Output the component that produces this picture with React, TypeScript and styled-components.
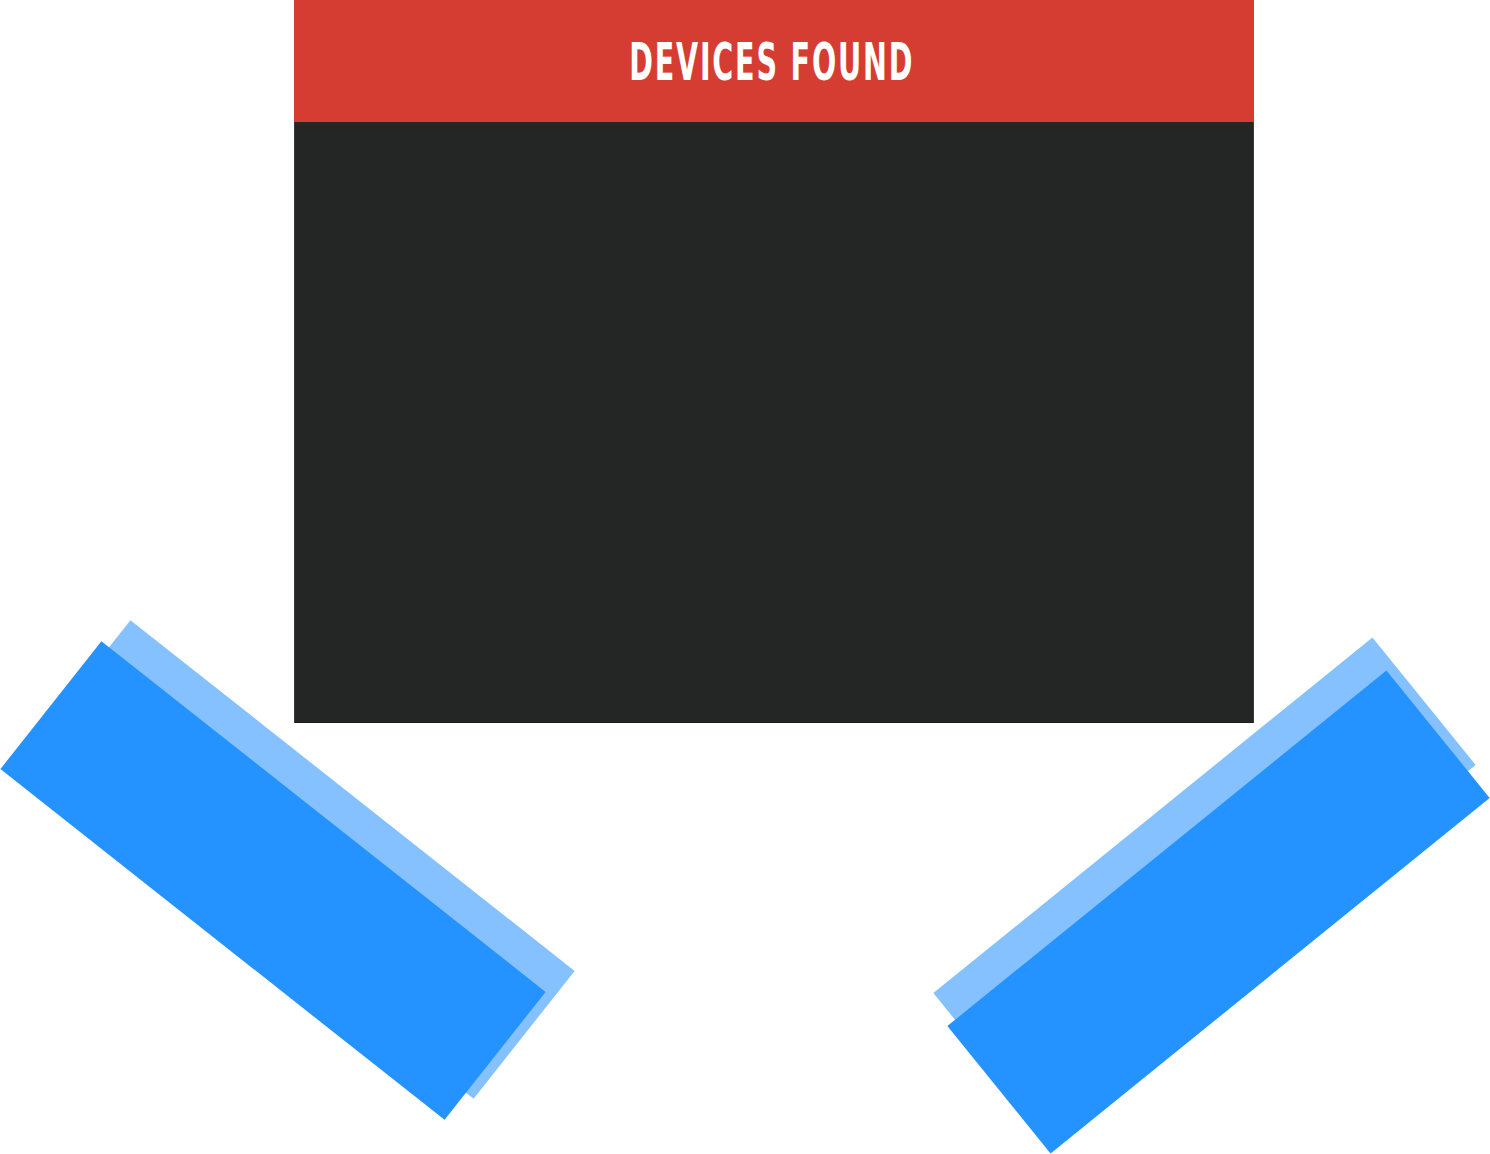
import React from 'react';
import styled, { createGlobalStyle } from 'styled-components';

const GlobalStyle = createGlobalStyle`
  html, body {
    margin: 0;
    padding: 0;
    background: #ffffff;
  }
`;

const Stage = styled.div`
  position: relative;
  width: 1490px;
  height: 1154px;
  overflow: hidden;
  background: #ffffff;
`;

const Panel = styled.section`
  position: relative;
  z-index: 1;
  width: 960px;
  margin: 0 auto 0 294px;
  display: flex;
  flex-direction: column;
`;

const PanelHeader = styled.header`
  height: 122px;
  background: #d63d32;
  display: flex;
  align-items: center;
  justify-content: center;
`;

const PanelTitle = styled.h1`
  margin: 0;
  font-family: 'Liberation Sans Narrow', 'DejaVu Sans Condensed', 'Liberation Sans', sans-serif;
  font-weight: 700;
  font-size: 52px;
  line-height: 1;
  letter-spacing: 3px;
  color: #ffffff;
  text-transform: uppercase;
  white-space: nowrap;
  transform: translate(-2px, 1px) scaleX(0.61);
`;

const PanelBody = styled.div`
  height: 601px;
  background: #242525;
  box-shadow: inset 1px 0 0 #3a3b3b, inset -1px 0 0 #3a3b3b, inset 0 -1px 0 #1c1d1d;
`;

const Tape = styled.div<{ $x: number; $y: number; $w: number; $h: number; $angle: number; $tone: 'light' | 'dark' }>`
  position: absolute;
  left: ${({ $x, $w }) => $x - $w / 2}px;
  top: ${({ $y, $h }) => $y - $h / 2}px;
  width: ${({ $w }) => $w}px;
  height: ${({ $h }) => $h}px;
  background: ${({ $tone }) => ($tone === 'dark' ? '#2492ff' : '#85c1ff')};
  transform: rotate(${({ $angle }) => $angle}deg);
  z-index: ${({ $tone }) => ($tone === 'dark' ? 3 : 2)};
`;

const tapes = [
  { x: 301.5, y: 859.5, w: 566, h: 163, angle: 38.3, tone: 'light' as const },
  { x: 272.5, y: 880.5, w: 566, h: 163, angle: 38.3, tone: 'dark' as const },
  { x: 1204, y: 878.5, w: 565, h: 164, angle: -39, tone: 'light' as const },
  { x: 1218, y: 911.5, w: 565, h: 164, angle: -39, tone: 'dark' as const },
];

export default function App() {
  return (
    <>
      <GlobalStyle />
      <Stage>
        <Panel>
          <PanelHeader>
            <PanelTitle>Devices Found</PanelTitle>
          </PanelHeader>
          <PanelBody />
        </Panel>
        {tapes.map((t, i) => (
          <Tape key={i} $x={t.x} $y={t.y} $w={t.w} $h={t.h} $angle={t.angle} $tone={t.tone} />
        ))}
      </Stage>
    </>
  );
}
